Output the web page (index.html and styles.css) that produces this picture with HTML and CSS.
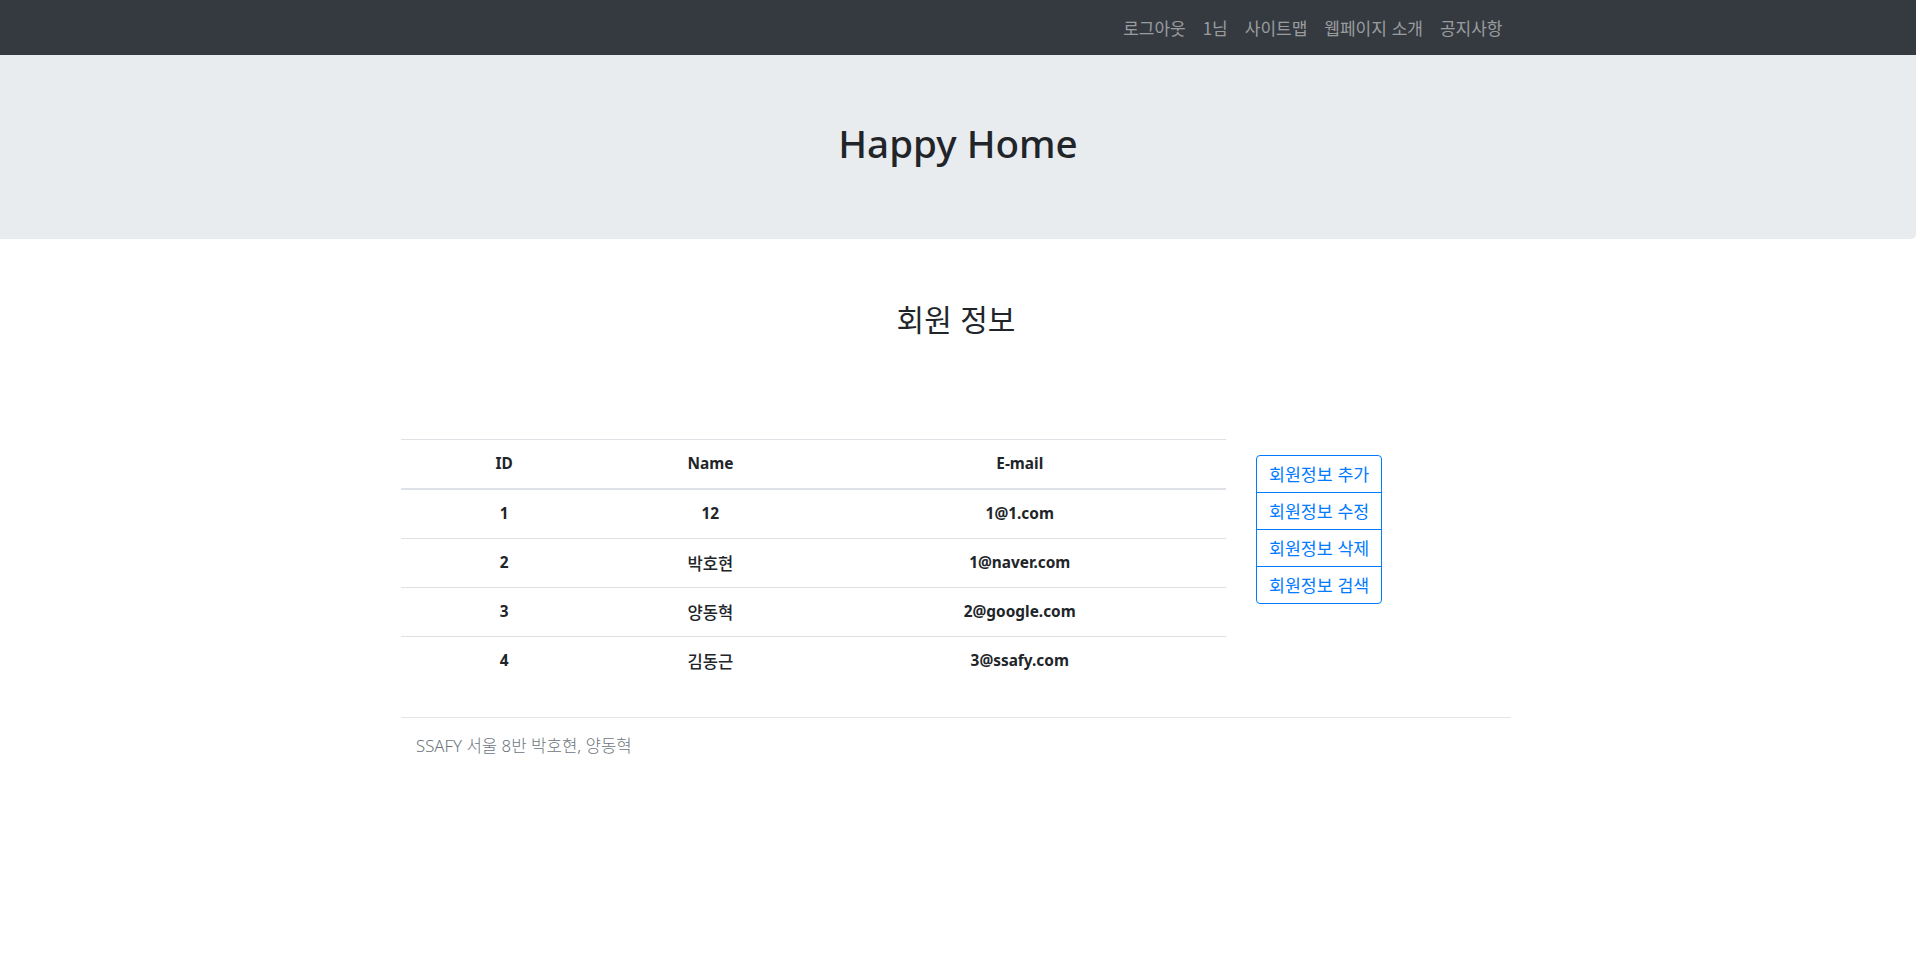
FILE: index.html
```html
<!DOCTYPE html>
<html lang="ko">
<head>
<meta charset="utf-8">
<title>Happy Home</title>
<link rel="stylesheet" href="styles.css">
</head>
<body>
<nav class="navbar">
  <div class="container nav-inner">
    <ul class="nav-links">
      <li><a href="#">로그아웃</a></li>
      <li><a href="#">1님</a></li>
      <li><a href="#">사이트맵</a></li>
      <li><a href="#">웹페이지 소개</a></li>
      <li><a href="#">공지사항</a></li>
    </ul>
  </div>
</nav>
<header class="jumbotron">
  <h1 class="brand">Happy Home</h1>
</header>
<main class="container">
  <h3 class="page-title">회원 정보</h3>
  <div class="row">
    <div class="col-main">
      <table class="table">
        <thead>
          <tr><th class="c-id">ID</th><th class="c-name">Name</th><th class="c-mail">E-mail</th></tr>
        </thead>
        <tbody>
          <tr><th>1</th><th>12</th><th>1@1.com</th></tr>
          <tr><th>2</th><th><span class="ko">박호현</span></th><th>1@naver.com</th></tr>
          <tr><th>3</th><th><span class="ko">양동혁</span></th><th>2@google.com</th></tr>
          <tr><th>4</th><th><span class="ko">김동근</span></th><th>3@ssafy.com</th></tr>
        </tbody>
      </table>
    </div>
    <div class="col-side">
      <div class="btn-group-vertical">
        <a class="btn" href="#">회원정보 추가</a>
        <a class="btn" href="#">회원정보 수정</a>
        <a class="btn" href="#">회원정보 삭제</a>
        <a class="btn" href="#">회원정보 검색</a>
      </div>
    </div>
  </div>
  <hr class="divider">
  <footer class="footer">SSAFY 서울 8반 박호현, 양동혁</footer>
</main>
</body>
</html>
```
FILE: styles.css
```css
* { box-sizing: border-box; }
html, body { margin: 0; padding: 0; }
body {
  font-family: "Noto Sans", "Noto Sans CJK KR", sans-serif;
  font-size: 16px;
  line-height: 1.5;
  color: #212529;
  background: #fff;
}
.container {
  width: 1140px;
  margin: 0 auto 0 calc(50% - 572px);
  padding: 0 15px;
}
.navbar {
  background: #343a40;
  height: 55px;
  display: flex;
  align-items: center;
}
.nav-inner {
  display: flex;
  justify-content: flex-end;
}
.nav-links {
  list-style: none;
  margin: 0;
  padding: 0;
  display: flex;
}
.nav-links a {
  display: block;
  padding: 8px 8.5px;
  color: rgba(255,255,255,.5);
  text-decoration: none;
  font-family: "Noto Sans CJK KR", sans-serif;
  font-size: 17px;
  line-height: 24px;
}
.jumbotron {
  background: #e9ecef;
  padding: 64px 32px;
  border-radius: 0 0 5px 0;
  text-align: center;
}
.brand {
  margin: 0 0 8px;
  font-family: "Noto Sans", sans-serif;
  font-size: 38.6px;
  font-weight: 500;
  line-height: 48px;
}
.page-title {
  margin: 62px 0 0;
  text-align: center;
  font-family: "Noto Sans CJK KR", sans-serif;
  font-size: 30px;
  font-weight: 400;
  line-height: 34px;
}
.row {
  display: flex;
  margin: 104px -15px 0;
}
.col-main {
  width: 75%;
  padding: 0 15px;
}
.col-side {
  width: 25%;
  padding: 0 15px;
}
.table {
  width: 100%;
  border-collapse: collapse;
  margin-bottom: 16px;
}
.table th {
  padding: 12px;
  border-top: 1px solid #dee2e6;
  text-align: center;
  font-family: "Noto Sans", "Noto Sans CJK KR", sans-serif;
  font-weight: 700;
  font-size: 15.4px;
  line-height: 24px;
}
.table .ko {
  display: inline-block;
  vertical-align: top;
  height: 24px;
  font-family: "Noto Sans CJK KR", sans-serif;
  font-weight: 500;
  font-size: 16.6px;
  line-height: 24px;
}
.table thead th {
  border-bottom: 2px solid #dee2e6;
}
.c-id { width: 25%; }
.c-name { width: 25%; }
.c-mail { width: 50%; }
.btn-group-vertical {
  display: inline-flex;
  flex-direction: column;
  margin-top: 16px;
}
.btn {
  display: block;
  padding: 6px 12px;
  border: 1px solid #007bff;
  color: #007bff;
  text-decoration: none;
  font-family: "Noto Sans CJK KR", sans-serif;
  font-size: 17.3px;
  line-height: 24px;
  text-align: center;
}
.btn + .btn { margin-top: -1px; }
.btn:first-child { border-radius: 4px 4px 0 0; }
.btn:last-child { border-radius: 0 0 4px 4px; }
.divider {
  margin: 16px 0 0;
  border: 0;
  border-top: 1px solid rgba(0,0,0,.1);
}
.footer {
  padding: 16px 15px;
  color: #6c757d;
  font-family: "Noto Sans", "Noto Sans CJK KR", sans-serif;
  font-weight: 300;
  font-size: 16.8px;
  line-height: 24px;
}
```
